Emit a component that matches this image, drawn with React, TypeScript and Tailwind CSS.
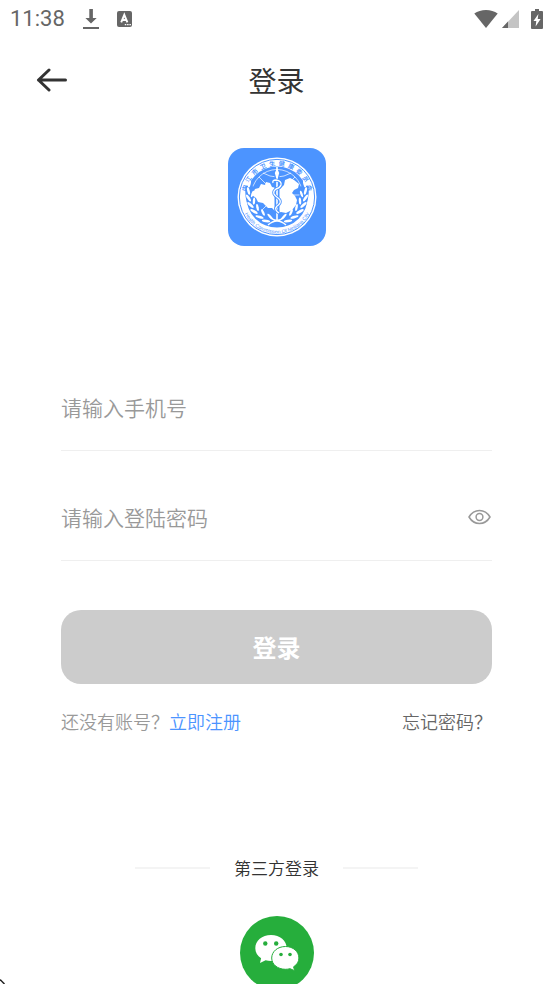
import React, { useState } from "react";

const cjk = "font-['Noto_Sans_CJK_SC',sans-serif]";

function StatusBar() {
  return (
    <div className="flex h-[38px] shrink-0 items-center justify-between px-[10px] text-[#666]">
      <div className="flex items-center">
        <span className="font-['Roboto',sans-serif] text-[22px] leading-[38px]">11:38</span>
        <svg className="ml-[18px] h-[22px] w-4" viewBox="0 0 16 22" fill="currentColor" aria-hidden="true">
          <path d="M6.3 1h3.6v9h3.8L8 15.600 2.400 10h3.900zM0 19h16v2H0z" />
        </svg>
        <svg className="ml-[18px] h-4 w-[15px]" viewBox="0 0 15 16" aria-hidden="true">
          <rect width="15" height="16" rx="2" fill="currentColor" />
          <path d="M4.200 11.400 7.300 3.800l3.100 7.600M5.400 9h3.800" fill="none" stroke="#fff" strokeWidth="1.900" />
          <path d="M7.800 13.600h1.500M10.100 13.600h1.500M12.400 13.600h1.500" stroke="#fff" strokeWidth="1.200" />
        </svg>
      </div>
      <div className="flex items-center">
        <svg className="h-[18px] w-6" viewBox="0 0 24 18" fill="currentColor" aria-hidden="true">
          <path d="M12 18 .3 3.600C3.500 1.200 7.500 0 12 0s8.500 1.200 11.700 3.600z" />
        </svg>
        <svg className="ml-1 h-[18px] w-[17px]" viewBox="0 0 17 18" aria-hidden="true">
          <path d="M17 0v18H0z" fill="#c4c4c4" />
          <path d="M6 11.600V18H0z" fill="currentColor" />
        </svg>
        <svg className="ml-3 h-5 w-3" viewBox="0 0 12 20" aria-hidden="true">
          <path d="M4 0h4v2h3q1 0 1 1v16q0 1-1 1H1q-1 0-1-1V3q0-1 1-1h3z" fill="currentColor" />
          <path d="M7.400 5 2.500 12h2.800l-.7 5.500L9.600 10H6.700z" fill="#fff" />
        </svg>
      </div>
    </div>
  );
}

function Laurel() {
  return (
    <g fill="#fff">
      <path d="M22 38C20 56 29 68 46 74" fill="none" stroke="#4c94ff" strokeWidth="9" />
      <ellipse cx="21.500" cy="36" rx="1.200" ry="3.600" transform="rotate(14 21.500 36)" />
      <ellipse cx="20.500" cy="43" rx="1.300" ry="3.800" transform="rotate(-14 20.500 43)" />
      <ellipse cx="20.500" cy="50" rx="1.300" ry="4" transform="rotate(-34 20.500 50)" />
      <ellipse cx="22.500" cy="57" rx="1.300" ry="4" transform="rotate(-48 22.500 57)" />
      <ellipse cx="26" cy="63.500" rx="1.300" ry="4.200" transform="rotate(-62 26 63.500)" />
      <ellipse cx="31.500" cy="69" rx="1.300" ry="4.200" transform="rotate(-74 31.500 69)" />
      <ellipse cx="38" cy="73" rx="1.300" ry="4.200" transform="rotate(-84 38 73)" />
      <ellipse cx="24.500" cy="46" rx="1.200" ry="3.400" transform="rotate(18 24.500 46)" />
      <ellipse cx="26" cy="53" rx="1.200" ry="3.600" transform="rotate(4 26 53)" />
      <ellipse cx="29.500" cy="59.500" rx="1.200" ry="3.600" transform="rotate(-10 29.500 59.500)" />
      <ellipse cx="35" cy="64.500" rx="1.200" ry="3.600" transform="rotate(-24 35 64.500)" />
      <ellipse cx="42" cy="68.500" rx="1.200" ry="3.600" transform="rotate(-42 42 68.500)" />
    </g>
  );
}

function Emblem() {
  return (
    <svg className="size-[98px]" viewBox="0 0 98 98" role="img" aria-label="内江市卫生健康委员会">
      <defs>
        <path id="top-arc" d="M18.100 54a31.300 31.300 0 1 1 61.800 0" />
        <path id="bottom-arc" d="M12.900 52a36.200 36.200 0 0 0 72.200 0" />
      </defs>
      <circle cx="49" cy="49" r="39.500" fill="#fff" />
      <circle cx="49" cy="49" r="37.600" fill="none" stroke="#4c94ff" strokeWidth="1" />
      <circle cx="49" cy="49" r="30.600" fill="#4c94ff" />
      <text className="font-['Noto_Sans_CJK_SC',sans-serif] text-[6px] font-bold" fill="#4c94ff">
        <textPath href="#top-arc" startOffset="50%" textAnchor="middle">
          内&#8194;江&#8194;市&#8194;卫&#8194;生&#8194;健&#8194;康&#8194;委&#8194;员&#8194;会
        </textPath>
      </text>
      <text className="font-['Liberation_Sans',sans-serif] text-[5px]" fill="#4c94ff">
        <textPath href="#bottom-arc" startOffset="50%" textAnchor="middle">
          Health Commission Of Neijiang City
        </textPath>
      </text>
      <g fill="none" stroke="#fff" strokeWidth="0.700">
        <circle cx="49" cy="47" r="25.500" />
        <path d="M24 47h50M31 29l36 36M67 29 31 65M35 25q14 8 28 0" />
      </g>
      <Laurel />
      <g transform="translate(98 0) scale(-1 1)">
        <Laurel />
      </g>
      <path
        fill="#fff"
        d="m27 41 4-1 2-4 4 1 1-3 4 1 2 4 8 2 4-4 1-5 5-2 4 2 5 4-1 4-4 2-2 3 3 3 2 4-1 5-4 5-6 3-5-1-4 1-5-5-4 0-5-5-5-1-2-4-4-3z"
      />
      <path d="M49 22v50" stroke="#4c94ff" strokeWidth="5" />
      <path d="M49 19v54" stroke="#fff" strokeWidth="1.600" />
      <path d="M49 20l2.200 5-2.200 8-2.200-8z" fill="#fff" />
      <path
        d="M45 35q-1-3 3-3 6 1 5 5-1 3-5 4-3 2-2 5 1 2 4 4 3 2 2 5-1 2-3 3-2 2-1 4 1 2 3 3"
        fill="none"
        stroke="#4c94ff"
        strokeWidth="3"
      />
      <path
        d="M45 35q-1-3 3-3 6 1 5 5-1 3-5 4-3 2-2 5 1 2 4 4 3 2 2 5-1 2-3 3-2 2-1 4 1 2 3 3"
        fill="none"
        stroke="#fff"
        strokeWidth="1.300"
      />
      <path d="M40 77q9-8 18 0M42 69q7 7 14 0" fill="none" stroke="#fff" strokeWidth="1.500" />
    </svg>
  );
}

const fieldClass = "flex h-[86px] items-center border-b border-[#efefef] pb-[2px]";
const inputClass =
  "min-w-0 flex-1 bg-transparent text-[21px] font-[350] leading-8 text-[#333] outline-none placeholder:text-[#999]";

export default function App() {
  const [visible, setVisible] = useState(false);

  return (
    <div className={`relative flex h-screen flex-col overflow-hidden bg-white ${cjk}`}>
      <StatusBar />

      <header className="grid h-[84px] shrink-0 grid-cols-[1fr_auto_1fr] items-center px-9">
        <button type="button" aria-label="返回" className="justify-self-start text-[#333]">
          <svg
            className="h-6 w-8"
            viewBox="0 0 32 24"
            fill="none"
            stroke="currentColor"
            strokeWidth="3"
            strokeLinecap="round"
            strokeLinejoin="round"
          >
            <path d="M29.500 12H2.500M13 2 2.500 12 13 22" />
          </svg>
        </button>
        <h1 className="text-[28px] font-normal leading-10 text-[#333]">登录</h1>
      </header>

      <main className="flex shrink-0 flex-col px-[61px] pt-[26px]">
        <div className="self-center overflow-hidden rounded-2xl bg-[#4c94ff]">
          <Emblem />
        </div>

        <form className="mt-[119px]" onSubmit={(e) => e.preventDefault()}>
          <div className={fieldClass}>
            <input type="tel" aria-label="手机号" placeholder="请输入手机号" className={inputClass} />
          </div>
          <div className={`mt-6 ${fieldClass}`}>
            <input
              type={visible ? "text" : "password"}
              aria-label="登陆密码"
              placeholder="请输入登陆密码"
              className={inputClass}
            />
            <button type="button" aria-label="显示密码" onClick={() => setVisible(!visible)} className="text-[#999]">
              <svg className="h-4 w-6" viewBox="0 0 24 16" fill="none" stroke="currentColor" strokeWidth="1.500">
                <path d="M1 8C3.500 3.800 7 1.500 11.500 1.500S19.500 3.800 22 8C19.500 12.200 16 14.500 11.500 14.500S3.500 12.200 1 8z" />
                <circle cx="11.500" cy="8" r="3.400" />
              </svg>
            </button>
          </div>

          <button
            type="submit"
            className="mt-[49px] h-[74px] w-full rounded-[20px] bg-[#ccc] text-[24px] font-bold leading-9 text-white"
          >
            登录
          </button>
        </form>

        <div className="mt-[23px] flex justify-between text-[18px] font-[350] leading-7">
          <p className="text-[#999]">
            还没有账号？
            <a href="#register" className="text-[#4c94ff]">
              立即注册
            </a>
          </p>
          <a href="#forgot" className="text-[#666]">
            忘记密码？
          </a>
        </div>

        <div className="mt-[121px] flex items-center justify-center gap-6 text-[17px] font-[350] leading-6 text-[#333]">
          <span className="h-[2px] w-[75px] bg-[#f4f4f4]" />
          <h2>第三方登录</h2>
          <span className="h-[2px] w-[75px] bg-[#f4f4f4]" />
        </div>

        <button type="button" aria-label="微信登录" className="mt-9 size-[74px] self-center rounded-full bg-[#26ae3c]">
          <svg className="size-[74px]" viewBox="0 0 74 74" fill="#fff">
            <path d="M31 19c-9 0-15.700 5.800-15.700 13.200 0 4.300 2.200 7.600 5.800 10L20 47l5.600-2.800q2.600.8 5.400.8c9 0 15.700-5.500 15.700-12.800S40 19 31 19z" />
            <path
              d="M45.500 30.500c-7.900 0-13.800 5.100-13.800 11.500S37.600 53.300 45.500 53.300q2.200 0 4.500-.6l4.600 2-1-3.900c3.500-2.200 5.300-5.200 5.300-8.800 0-6.400-5.700-11.500-13.400-11.500z"
              stroke="#26ae3c"
              strokeWidth="1"
            />
            <g fill="#26ae3c">
              <circle cx="25.300" cy="27.500" r="2.200" />
              <circle cx="36.200" cy="27.500" r="2.200" />
              <circle cx="41" cy="38.500" r="1.800" />
              <circle cx="50" cy="38.500" r="1.800" />
            </g>
          </svg>
        </button>
      </main>

      <svg className="absolute bottom-0 left-0 size-[5px]" viewBox="0 0 5 5" aria-hidden="true">
        <path d="M0 .5 4.500 5" stroke="#222" strokeWidth="1.500" />
      </svg>
    </div>
  );
}
